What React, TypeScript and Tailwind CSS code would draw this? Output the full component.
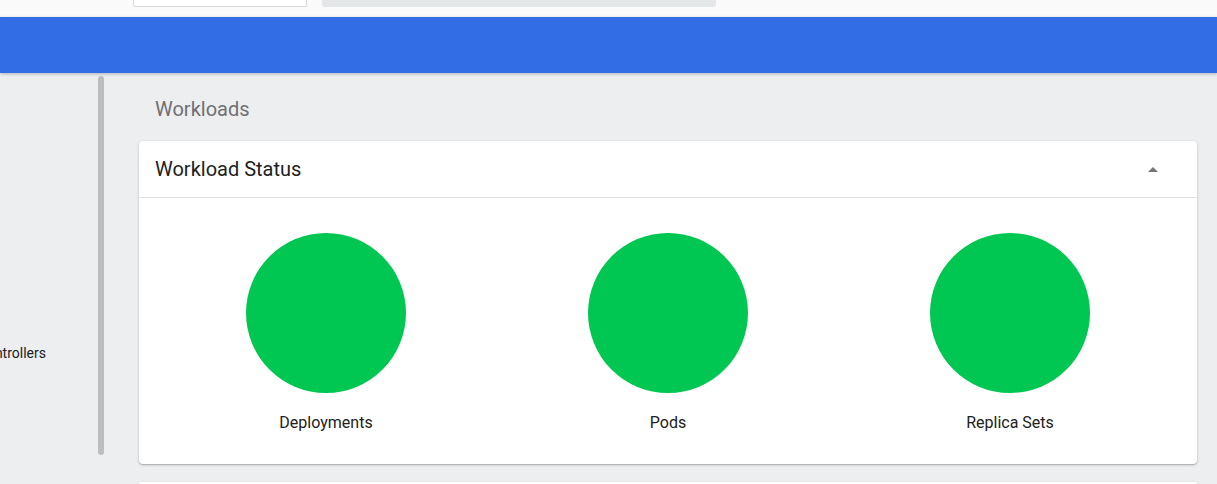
const statuses = ["Deployments", "Pods", "Replica Sets"];

function StatusCircle({ label }: { label: string }) {
  return (
    <div className="flex flex-col items-center">
      <div className="h-[160px] w-[160px] rounded-full bg-[#00c752]" />
      <div className="mt-[20px] text-[16px] leading-5 text-[#212121]">{label}</div>
    </div>
  );
}

export default function App() {
  return (
    <div className="flex h-[484px] w-[1217px] flex-col overflow-hidden bg-[#edeef0] font-['Roboto',sans-serif]">
      {/* strip of the page above the toolbar */}
      <div className="flex h-[17px] shrink-0 items-start bg-[#fafafa]">
        <div className="ml-[133px] h-[7px] w-[174px] rounded-b-[2px] border border-t-0 border-[#d8d8d8] bg-white" />
        <div className="ml-[15px] h-[7px] w-[394px] rounded-b-[3px] bg-[#e3e7e8]" />
      </div>

      <div className="relative z-10 h-[56px] shrink-0 bg-[#326de6] shadow-[0_1px_3px_rgba(0,0,0,0.25)]" />

      <div className="flex min-h-0 flex-1">
        {/* sidebar */}
        <div className="flex w-[107px] shrink-0">
          <div className="flex flex-1 flex-col overflow-hidden">
            <div className="mt-[270px] flex w-[46px] justify-end overflow-hidden whitespace-nowrap text-[14px] leading-5 text-[#212121]">
              Replication Controllers
            </div>
          </div>
          <div className="mr-[3px] mt-[3px] h-[379px] w-[6px] rounded-full bg-[#bdbdbd]" />
        </div>

        {/* main */}
        <div className="flex flex-1 flex-col pl-[32px] pr-[20px]">
          <div className="pl-[16px] pt-[24px] text-[20px] leading-[24px] text-[#707070]">Workloads</div>

          <div className="mt-[20px] rounded-[4px] bg-white shadow-[0_1px_3px_rgba(0,0,0,0.2),0_1px_1px_rgba(0,0,0,0.14)]">
            <div className="flex h-[57px] items-center justify-between border-b border-[#e0e0e0] pl-[16px] pr-[39px]">
              <span className="text-[20px] leading-6 text-[#212121]">Workload Status</span>
              <svg width="10" height="5" viewBox="0 0 10 5" className="mt-[1px]">
                <path d="M0 5 L5 0 L10 5 Z" fill="#757575" />
              </svg>
            </div>
            <div className="grid grid-cols-3 px-[16px] pb-[31px] pt-[35px]">
              {statuses.map((s) => (
                <StatusCircle key={s} label={s} />
              ))}
            </div>
          </div>

          <div className="mt-[18px] h-[40px] rounded-[4px] bg-white shadow-[0_1px_3px_rgba(0,0,0,0.2),0_1px_1px_rgba(0,0,0,0.14)]" />
        </div>
      </div>
    </div>
  );
}
